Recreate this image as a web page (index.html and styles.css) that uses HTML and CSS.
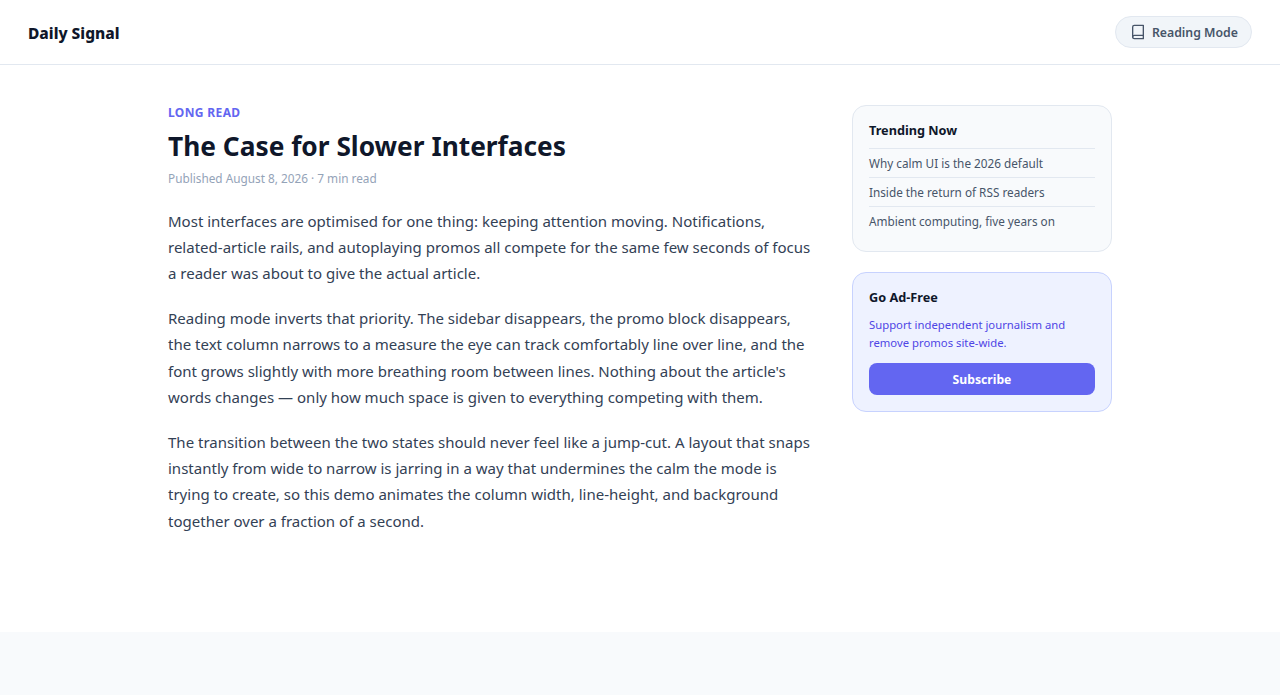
FILE: index.html
```html
<!DOCTYPE html>
<html lang="en">
<head>
<meta charset="utf-8">
<title>Daily Signal</title>
<link rel="stylesheet" href="styles.css">
</head>
<body>
<div class="page">
  <header class="topbar">
    <div class="brand">Daily Signal</div>
    <button class="mode-btn" type="button">
      <svg class="mode-icon" viewBox="0 0 24 24" width="16" height="16" fill="none" stroke="currentColor" stroke-width="2" stroke-linecap="round" stroke-linejoin="round"><path d="M4 19.5A2.5 2.5 0 0 1 6.5 17H20"/><path d="M6.5 2H20v20H6.5A2.5 2.5 0 0 1 4 19.5v-15A2.5 2.5 0 0 1 6.5 2z"/></svg>
      <span>Reading Mode</span>
    </button>
  </header>
  <div class="layout">
    <article class="article">
      <div class="kicker">LONG READ</div>
      <h1 class="title">The Case for Slower Interfaces</h1>
      <div class="meta">Published August 8, 2026 · 7 min read</div>
      <p>Most interfaces are optimised for one thing: keeping attention moving. Notifications, related-article rails, and autoplaying promos all compete for the same few seconds of focus a reader was about to give the actual article.</p>
      <p>Reading mode inverts that priority. The sidebar disappears, the promo block disappears, the text column narrows to a measure the eye can track comfortably line over line, and the font grows slightly with more breathing room between lines. Nothing about the article's words changes — only how much space is given to everything competing with them.</p>
      <p>The transition between the two states should never feel like a jump-cut. A layout that snaps instantly from wide to narrow is jarring in a way that undermines the calm the mode is trying to create, so this demo animates the column width, line-height, and background together over a fraction of a second.</p>
    </article>
    <aside class="sidebar">
      <section class="card trending">
        <h2 class="card-title">Trending Now</h2>
        <ul class="trend-list">
          <li>Why calm UI is the 2026 default</li>
          <li>Inside the return of RSS readers</li>
          <li>Ambient computing, five years on</li>
        </ul>
      </section>
      <section class="card promo">
        <h2 class="card-title">Go Ad-Free</h2>
        <p class="promo-text">Support independent journalism and remove promos site-wide.</p>
        <button class="subscribe" type="button">Subscribe</button>
      </section>
    </aside>
  </div>
</div>
</body>
</html>
```
FILE: styles.css
```css
* { box-sizing: border-box; }
html, body { margin: 0; padding: 0; }
body {
  background: #f8fafc;
  color: #0f172a;
  font-family: "Noto Sans", sans-serif;
  min-height: 695px;
}
.page { background: #fff; height: 632px; }
.topbar {
  height: 65px;
  display: flex;
  align-items: center;
  justify-content: space-between;
  padding: 0 28px;
  border-bottom: 1px solid #e2e8f0;
}
.brand { font-size: 15.5px; font-weight: 800; color: #0f172a; padding-top: 2px; }
.mode-btn {
  display: flex;
  align-items: center;
  gap: 6px;
  height: 32px;
  padding: 0 13px 0 14px;
  border: 1px solid #e2e8f0;
  border-radius: 999px;
  background: #f1f5f9;
  color: #475569;
  font: 600 12.3px "Noto Sans", sans-serif;
}
.mode-icon { display: block; }
.layout {
  width: 944px;
  margin: 0 auto;
  padding-top: 40px;
  display: flex;
  gap: 40px;
}
.article { flex: 1; min-width: 0; }
.kicker { font-size: 12px; font-weight: 700; color: #6366f1; letter-spacing: .03em; line-height: 16px; }
.title { margin: 8px 0 6px; font-size: 26.3px; font-weight: 700; line-height: 34px; color: #0f172a; }
.meta { font-size: 11.8px; line-height: 18px; color: #94a3b8; margin-bottom: 20.5px; }
.article p { margin: 0 0 18.1px; font-size: 15.03px; line-height: 26.4px; color: #334155; }
.sidebar { width: 260px; flex: none; display: flex; flex-direction: column; gap: 20px; }
.card { border-radius: 14px; padding: 16px; border: 1px solid #e2e8f0; }
.trending { background: #f8fafc; }
.promo { background: #eef2ff; border-color: #c7d2fe; }
.card-title { margin: 0 0 10px; font-size: 12.7px; line-height: 16px; font-weight: 700; color: #0f172a; }
.trend-list { list-style: none; margin: 0; padding: 0; }
.trend-list li { font-size: 11.75px; line-height: 16px; color: #475569; padding: 6px 0; border-top: 1px solid #e2e8f0; }
.promo .card-title { margin-bottom: 11px; }
.promo-text { margin: 0 0 11px; font-size: 11.3px; line-height: 18px; color: #4f46e5; }
.subscribe {
  display: block;
  width: 100%;
  height: 32px;
  border: 0;
  border-radius: 8px;
  background: #6366f1;
  color: #fff;
  font: 700 12.2px "Noto Sans", sans-serif;
}
```
